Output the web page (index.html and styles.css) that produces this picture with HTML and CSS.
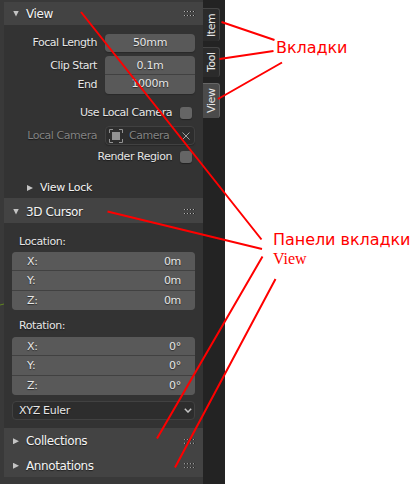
FILE: index.html
```html
<!DOCTYPE html>
<html lang="ru">
<head>
<meta charset="utf-8">
<title>View sidebar</title>
<link rel="stylesheet" href="styles.css">
</head>
<body>
<main class="stage">
  <section class="editor">
    <div class="sidebar">
      <section class="panel">
        <h2 class="head"><span class="tri down"></span>View<span class="grip"></span></h2>
        <div class="body view-body">
          <div class="row"><label>Focal Length</label><div class="field single">50mm</div></div>
          <div class="row clip"><label>Clip Start</label><div class="field top">0.1m</div></div>
          <div class="row end"><label>End</label><div class="field bottom">1000m</div></div>
          <div class="row check local"><label>Use Local Camera</label><span class="box"></span></div>
          <div class="row camera"><label>Local Camera</label>
            <div class="field picker">
              <svg class="obj" viewBox="0 0 14 14"><path d="M.5 4V.5H4M10 .5h3.5V4M13.500 10v3.500H10M4 13.500H.5V10"/><rect x="3" y="3" width="8" height="8"/></svg>
              <span>Camera</span>
              <svg class="close" viewBox="0 0 8 8"><path d="M.5.5l7 7M7.500.5l-7 7"/></svg>
            </div>
          </div>
          <div class="row check region"><label>Render Region</label><span class="box"></span></div>
          <div class="sub"><span class="tri right"></span>View Lock</div>
        </div>
      </section>
      <section class="panel">
        <h2 class="head cursor"><span class="tri down"></span>3D Cursor<span class="grip"></span></h2>
        <div class="body cursor-body">
          <div class="caption">Location:</div>
          <div class="stack">
            <div class="cell"><span>X:</span><span>0m</span></div>
            <div class="cell"><span>Y:</span><span>0m</span></div>
            <div class="cell"><span>Z:</span><span>0m</span></div>
          </div>
          <div class="caption second">Rotation:</div>
          <div class="stack">
            <div class="cell"><span>X:</span><span>0°</span></div>
            <div class="cell"><span>Y:</span><span>0°</span></div>
            <div class="cell"><span>Z:</span><span>0°</span></div>
          </div>
          <div class="select">XYZ Euler<svg viewBox="0 0 8 5"><path d="M.8.8L4 4 7.200.8"/></svg></div>
        </div>
      </section>
      <h2 class="head closed"><span class="tri right"></span>Collections<span class="grip"></span></h2>
      <h2 class="head closed"><span class="tri right"></span>Annotations<span class="grip"></span></h2>
    </div>
    <nav class="tabs">
      <div class="tab item">Item</div>
      <div class="tab tool">Tool</div>
      <div class="tab active">View</div>
    </nav>
  </section>
  <svg class="lines" viewBox="0 0 414 486">
    <path class="axis" d="M0 305L4 304"/>
    <path d="M221.500 22L274.500 40M219.500 59L273.500 51M218 99L282 62.500M81 12L261.500 239.500M107.500 211.500L262 249M262.500 256.500L157 438.500M275.500 279L175 467.500"/>
  </svg>
  <div class="note tabs-note">Вкладки</div>
  <div class="note panels-note">Панели вкладки<br><span class="serif">View</span></div>
</main>
</body>
</html>
```
FILE: styles.css
```css
* { box-sizing: border-box; }
body { margin: 0; background: #fff; font: 11px/14px "DejaVu Sans", sans-serif; color: #e6e6e6; }
.stage { position: relative; width: 414px; height: 486px; overflow: hidden; }
.editor { display: flex; width: 225px; height: 484px; padding: 2px 0 0 4px; background: #393939; }
.sidebar { width: 199px; text-shadow: 0 1px 1px #0008; }
.head { display: flex; align-items: center; height: 23px; margin: 0; padding: 0 8px 0 9px; background: #434343; font-size: 12px; font-weight: 400; letter-spacing: -.4px; color: #f4f4f4; }
.head.cursor { height: 25px; padding-top: 2px; }
.head.closed { height: 24.500px; padding-top: 2px; }
.tri { flex: none; width: 6px; height: 6px; margin-right: 7px; background: #c4c4c4; }
.tri.down { clip-path: polygon(0 0, 100% 0, 50% 100%); }
.tri.right { clip-path: polygon(0 0, 100% 50%, 0 100%); }
.grip { width: 11px; height: 5px; margin-left: auto; background: repeating-linear-gradient(90deg, #b0b0b0 0 1px, #222 1px 2px, transparent 2px 3px); clip-path: polygon(0 0, 100% 0, 100% 1px, 0 1px, 0 4px, 100% 4px, 100% 5px, 0 5px); }
.body { background: #333; }
.view-body { height: 173px; padding: 9px 8px 0 0; }
.row { display: flex; align-items: center; height: 18px; }
.row label { width: 93px; margin-right: 8px; text-align: right; white-space: nowrap; letter-spacing: -.45px; }
.row .field { width: 90px; height: 18px; background: #595959; border-radius: 4px; text-align: center; line-height: 18px; letter-spacing: -.3px; box-shadow: 0 1px 1px #2229; }
.clip { height: 19px; margin-top: 4px; }
.row .field.top { height: 19px; border-radius: 4px 4px 0 0; border-bottom: 1px solid #414141; line-height: 19px; box-shadow: none; }
.end { height: 19px; }
.row .field.bottom { height: 19px; border-radius: 0 0 4px 4px; }
.check { height: 12px; }
.check label { width: 168px; }
.box { width: 12px; height: 12px; border-radius: 3px; background: #656565; box-shadow: 0 1px 1px #222; }
.local { margin-top: 13px; }
.camera { height: 19px; margin-top: 7px; color: #828282; }
.row .picker { display: flex; align-items: center; height: 19px; padding: 0 4px 0 3px; border: 1px solid #414141; background: #2d2d2d; letter-spacing: -.5px; }
.obj { flex: none; width: 14px; height: 14px; margin-right: 6px; }
.obj path { fill: none; stroke: #929292; }
.obj rect { fill: #929292; }
.close { flex: none; width: 8px; height: 8px; margin-left: auto; fill: none; stroke: #a0a0a0; }
.region { margin-top: 6px; }
.sub { display: flex; align-items: center; height: 14px; margin-top: 18px; padding-left: 23px; letter-spacing: -.3px; color: #f4f4f4; }
.cursor-body { height: 205px; padding: 12px 8px 0; letter-spacing: -.3px; }
.caption { height: 14px; margin: 0 0 3px 7px; letter-spacing: -.4px; }
.caption.second { margin-top: 9px; margin-bottom: 4px; }
.stack { height: 58px; overflow: hidden; border-radius: 4px; display: grid; grid-template-rows: 18px 19px 19px; gap: 1px; background: #414141; }
.cell { display: flex; align-items: center; justify-content: space-between; padding: 1px 14px 0 15px; background: #595959; }
.select { display: flex; align-items: center; justify-content: space-between; height: 19px; margin-top: 6px; padding: 0 2px 0 6px; border: 1px solid #414141; border-radius: 4px; background: #2d2d2d; }
.select svg { width: 8px; height: 5px; fill: none; stroke: #c4c4c4; stroke-width: 1.500; }
.tabs { width: 22px; margin-top: -2px; padding-top: 8px; background: #232323; font-size: 11px; letter-spacing: -.4px; }
.tab { display: flex; align-items: center; justify-content: center; width: 17px; padding-right: 1px; writing-mode: vertical-rl; transform: rotate(180deg); background: #2b2b2b; border: solid #444; border-width: 0 0 1px 1px; border-radius: 3px 0 0 3px; }
.item { height: 33px; }
.tool { height: 30px; margin-top: 6px; }
.active { height: 35px; margin-top: 6px; background: #4b4b4b; border-color: #666; }
.lines { position: absolute; inset: 0; width: 414px; height: 486px; fill: none; stroke: #f00; stroke-width: 2; }
.lines .axis { stroke: #5f8420; stroke-width: 1; }
.note { position: absolute; color: #f00; font-size: 16px; line-height: 19px; letter-spacing: -.05px; white-space: nowrap; }
.tabs-note { left: 276px; top: 38px; }
.panels-note { left: 273px; top: 230px; }
.serif { font: 16px/20px "Liberation Serif", serif; }
```
